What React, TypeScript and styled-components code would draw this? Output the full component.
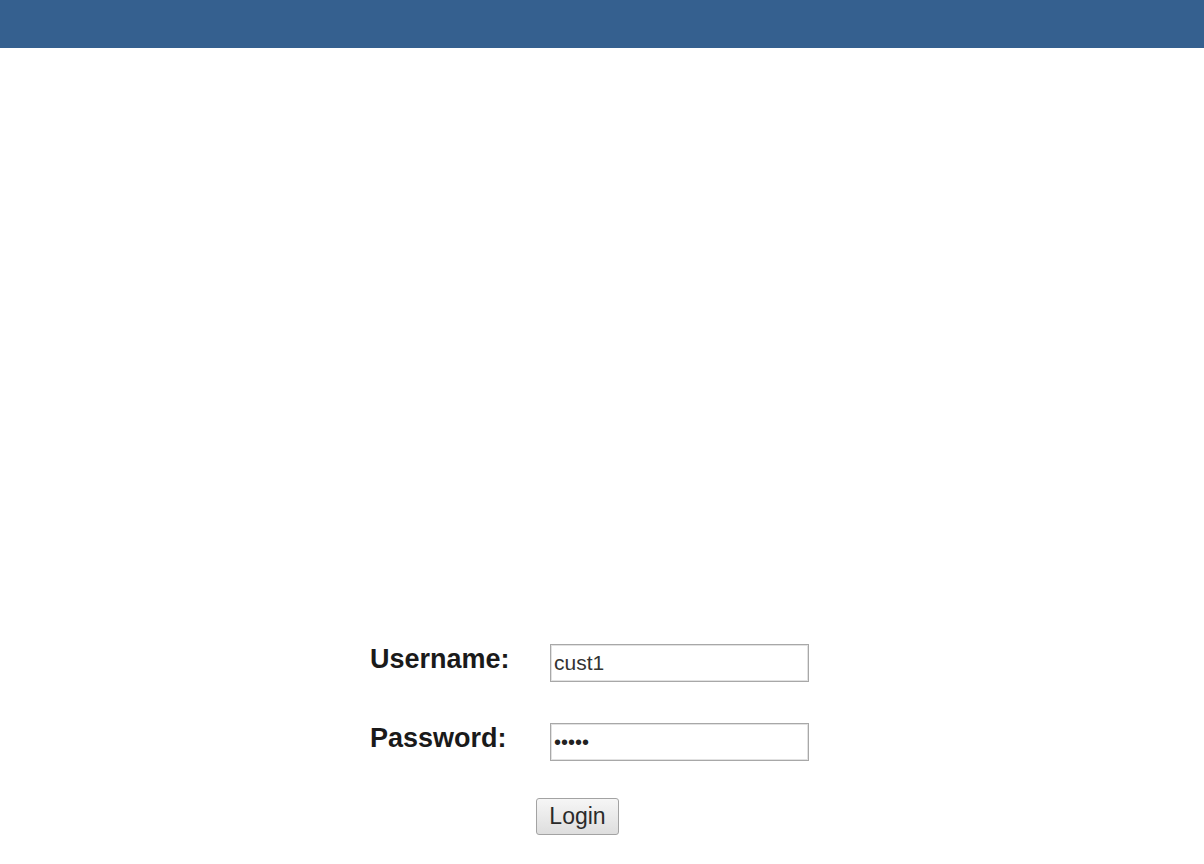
import React from "react";
import styled, { createGlobalStyle } from "styled-components";

const Global = createGlobalStyle`
  html, body { margin: 0; padding: 0; background: #ffffff; }
  body { font-family: "Liberation Sans", Arial, sans-serif; }
`;

const Page = styled.div`
  width: 1204px;
  height: 864px;
  display: flex;
  flex-direction: column;
  background: #ffffff;
  overflow: hidden;
`;

const Header = styled.header`
  height: 48px;
  flex: none;
  background: #35608f;
`;

const Main = styled.main`
  padding: 596px 0 0 370px;
  display: flex;
  flex-direction: column;
`;

const Form = styled.form`
  display: grid;
  grid-template-columns: 180px 259px;
  grid-auto-rows: 38px;
  row-gap: 41px;
  align-items: center;
`;

const Label = styled.label<{ $shift?: number }>`
  font-family: "Liberation Sans", Arial, sans-serif;
  font-weight: bold;
  font-size: 27px;
  color: #1a1a1a;
  line-height: 1;
  position: relative;
  top: ${(p) => p.$shift ?? 0}px;
`;

const Input = styled.input`
  box-sizing: border-box;
  width: 259px;
  height: 38px;
  margin: 0;
  padding: 0 0 0 3px;
  border: 1px solid #a8a8a8;
  box-shadow: inset 0 0 0 1px #e2e2e2;
  background: #ffffff;
  font-family: "Liberation Sans", Arial, sans-serif;
  font-size: 21px;
  color: #333333;
  outline: none;
`;

const PasswordInput = styled(Input)`
  font-size: 20px;
  color: #222;
`;

const ButtonRow = styled.div`
  grid-column: 1 / span 2;
  display: flex;
  padding-left: 166px;
  margin-top: -9px;
`;

const Button = styled.button`
  box-sizing: border-box;
  width: 83px;
  height: 37px;
  margin: 0;
  padding: 0;
  border: 1px solid #a3a3a3;
  border-radius: 3px;
  background: linear-gradient(#f6f6f6, #dedede);
  font-family: "Liberation Sans", Arial, sans-serif;
  font-size: 23px;
  color: #2a2a2a;
  cursor: pointer;
`;

export default function App() {
  return (
    <Page>
      <Global />
      <Header />
      <Main>
        <Form onSubmit={(e) => e.preventDefault()}>
          <Label htmlFor="u" $shift={-4}>Username:</Label>
          <Input id="u" type="text" defaultValue="cust1" />
          <Label htmlFor="p" $shift={-4}>Password:</Label>
          <PasswordInput id="p" type="password" defaultValue="cust1" />
          <ButtonRow>
            <Button type="submit">Login</Button>
          </ButtonRow>
        </Form>
      </Main>
    </Page>
  );
}
